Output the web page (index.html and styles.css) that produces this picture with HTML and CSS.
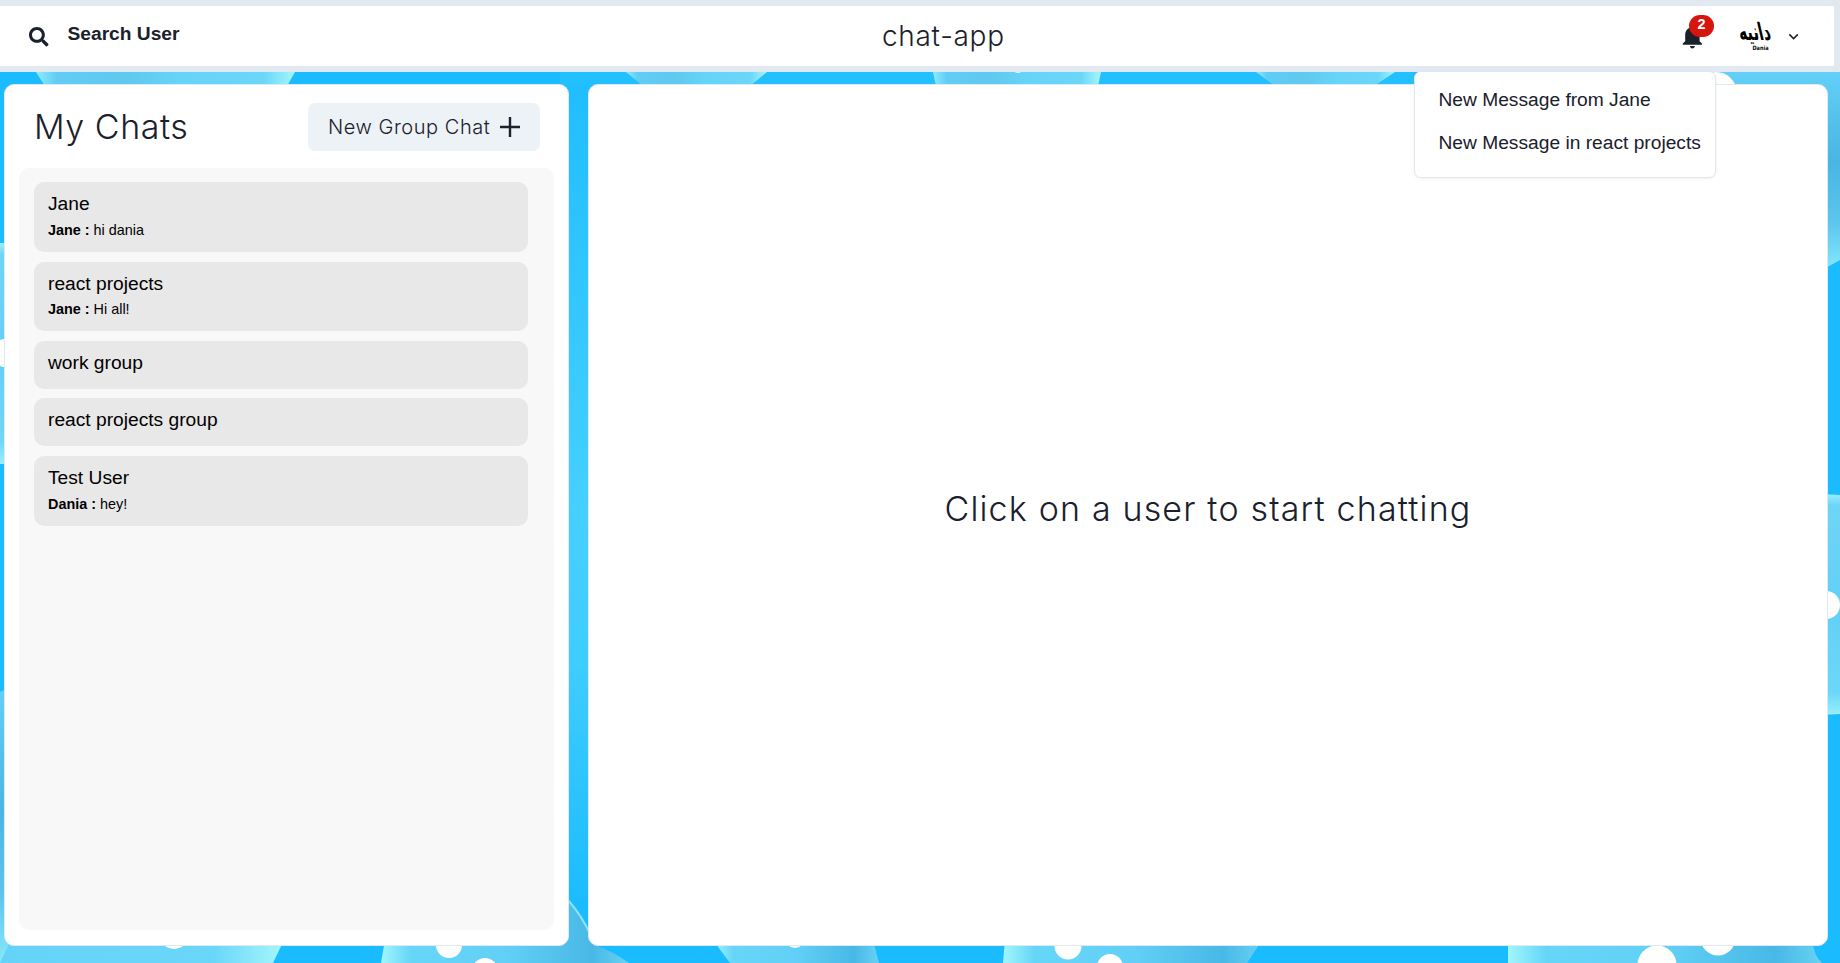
FILE: index.html
```html
<!DOCTYPE html>
<html lang="en">
<head>
<meta charset="utf-8">
<title>chat-app</title>
<link rel="stylesheet" href="styles.css">
</head>
<body>
<svg class="backdrop" viewBox="0 0 1840 963" aria-hidden="true">
  <defs>
    <linearGradient id="gap" x1="0" y1="0" x2="0" y2="1"><stop offset="0" stop-color="#1fbdff"/><stop offset=".5" stop-color="#45d0ff"/><stop offset=".68" stop-color="#3fccff"/><stop offset=".95" stop-color="#1bbcff"/></linearGradient>
    <linearGradient id="b" x1="0" x2="1"><stop offset="0" stop-color="#8eebfb"/><stop offset=".08" stop-color="#61cdf5"/><stop offset=".35" stop-color="#5fc9f0"/><stop offset=".55" stop-color="#66d3f8"/><stop offset=".88" stop-color="#6ad7f9"/><stop offset="1" stop-color="#a6f6fc"/></linearGradient>
    <linearGradient id="d" x1="0" x2="1"><stop offset="0" stop-color="#a2f6fc"/><stop offset=".12" stop-color="#66d6f8"/><stop offset=".5" stop-color="#62d0f6"/><stop offset=".85" stop-color="#48b8e6"/><stop offset="1" stop-color="#69d2f3"/></linearGradient>
    <linearGradient id="v" x1="0" y1="0" x2="0" y2="1"><stop offset="0" stop-color="#62d0f7"/><stop offset=".45" stop-color="#48b5e4"/><stop offset=".75" stop-color="#5cc5ed"/><stop offset="1" stop-color="#86e8f9"/></linearGradient>
    <linearGradient id="s" x1="0" y1="0" x2="0" y2="1"><stop offset="0" stop-color="#98f0fc"/><stop offset=".05" stop-color="#6fd5f7"/><stop offset=".5" stop-color="#63cff7"/><stop offset=".9" stop-color="#6bd8f9"/><stop offset="1" stop-color="#98f0fc"/></linearGradient>
  </defs>
  <rect width="1840" height="963" fill="#1bbcff"/>
  <rect x="560" y="72" width="40" height="875" fill="url(#gap)"/>
  <rect x="560" y="72" width="860" height="13" fill="#23c0ff"/>
  <g fill="url(#b)">
    <path d="M36 72 45 86H287L295 72Z"/>
    <path d="M626 72 643 86H750L767 72Z"/>
    <path d="M933 72 936 86H1098L1101 72Z"/>
    <path d="M1256 72 1275 86H1374L1395 72Z"/>
    <path d="M-300 940H284L273 963H-300Z"/>
  </g>
  <path d="M0 243H10V464H0Z" fill="url(#s)"/>
  <path d="M0 692 10 687V942L0 963Z" fill="url(#v)"/>
  <path d="M1690 72H1840V260L1820 271Z" fill="url(#v)"/>
  <path d="M1820 494 1840 495V714L1820 715Z" fill="url(#s)"/>
  <g fill="url(#d)">
    <path d="M385 940 381 963H629Q612 951 597 946L590 934Q580 912 565 897V940Z"/>
    <path d="M713 940 730 963H879L873 940Z"/>
    <path d="M1005 940 1003 963H1247L1262 940Z"/>
    <path d="M1508 940V963H1822Q1814 956 1812 940Z"/>
  </g>
  <path d="M568 900Q582 916 590 934" fill="none" stroke="#8ae3f8" stroke-width="2"/>
  <g fill="#fefffc">
    <circle cx="174" cy="934" r="15"/><circle cx="449" cy="945" r="13"/><circle cx="485" cy="971" r="13"/>
    <circle cx="795" cy="938" r="10"/><circle cx="1068" cy="946" r="13.5"/><circle cx="1110" cy="967" r="13"/>
    <circle cx="1657" cy="965" r="19.5"/><circle cx="1718" cy="938" r="17.5"/><circle cx="1716" cy="93" r="21"/>
    <ellipse cx="1826" cy="605" rx="14" ry="14"/><circle cx="5" cy="353" r="14"/>
    <circle cx="1018" cy="67" r="6"/>
  </g>
</svg>

<header class="topbar">
  <div class="search">
    <svg class="search-icon" viewBox="0 0 512 512"><path d="M505 442.700 405.300 343c-4.500-4.500-10.600-7-17-7H372c27.600-35.300 44-79.700 44-128C416 93.100 322.900 0 208 0S0 93.100 0 208s93.100 208 208 208c48.300 0 92.700-16.400 128-44v16.300c0 6.400 2.500 12.500 7 17l99.700 99.700c9.400 9.400 24.600 9.400 33.900 0l28.300-28.300c9.400-9.400 9.400-24.600.1-34zM208 336c-70.700 0-128-57.200-128-128 0-70.700 57.200-128 128-128 70.700 0 128 57.200 128 128 0 70.700-57.200 128-128 128z"/></svg>
    <span class="search-label">Search User</span>
  </div>
  <h1 class="brand">chat-app</h1>
  <div class="actions">
    <div class="bell">
      <svg class="bell-icon" viewBox="0 0 24 24"><path d="M12 22c1.100 0 2-.9 2-2h-4c0 1.100.89 2 2 2zm6-6v-5c0-3.070-1.640-5.640-4.500-6.320V4c0-.83-.67-1.500-1.500-1.500s-1.500.67-1.500 1.500v.68C7.630 5.360 6 7.920 6 11v5l-2 2v1h16v-1l-2-2z"/></svg>
      <span class="badge">2</span>
    </div>
    <svg class="avatar" viewBox="0 0 38 38">
      <text class="avatar-script" transform="matrix(1 0 .28 1.200 -3 0)" x="19" y="18.500" text-anchor="middle" textLength="32" lengthAdjust="spacingAndGlyphs">دانيه</text>
      <text class="avatar-name" x="17.500" y="31.500" textLength="16" lengthAdjust="spacingAndGlyphs">Dania</text>
    </svg>
    <svg class="chevron" viewBox="0 0 24 24"><path d="M16.590 8.590 12 13.170 7.410 8.590 6 10l6 6 6-6z"/></svg>
  </div>
  <div class="menu">
    <div class="menu-item">New Message from Jane</div>
    <div class="menu-item">New Message in react projects</div>
  </div>
</header>

<main class="panels">
  <section class="chats">
    <div class="chats-head">
      <h2 class="title">My Chats</h2>
      <button class="new-group"><span>New Group Chat</span><svg class="plus" viewBox="0 0 20 20"><path d="M10 0V20M0 10H20"/></svg></button>
    </div>
    <div class="list">
      <div class="chat"><div class="name">Jane</div><div class="last"><b>Jane : </b>hi dania</div></div>
      <div class="chat second"><div class="name">react projects</div><div class="last"><b>Jane : </b>Hi all!</div></div>
      <div class="chat short"><div class="name">work group</div></div>
      <div class="chat short"><div class="name">react projects group</div></div>
      <div class="chat"><div class="name">Test User</div><div class="last"><b>Dania : </b>hey!</div></div>
    </div>
  </section>
  <section class="conversation"><p class="hint">Click on a user to start chatting</p></section>
</main>
</body>
</html>
```
FILE: styles.css
```css
* { box-sizing: border-box; }
body {
  margin: 0;
  height: 963px;
  overflow: hidden;
  position: relative;
  color: #1a202c;
  font: 19.2px/29px "Liberation Sans", Arial, sans-serif;
}
h1, h2, p { margin: 0; font-weight: 300; font-family: Inter, "Open Sans", sans-serif; }
svg { display: block; fill: #1a202c; }
.backdrop { position: absolute; inset: 0; width: 1840px; height: 963px; z-index: -1; }

.topbar {
  position: relative;
  display: grid;
  grid-template-columns: 1fr auto 1fr;
  height: 72px;
  background: #fff;
  border: solid #e2e8f0;
  border-width: 6px 6px 6px 0;
}
.search { display: flex; padding: 13px 0 0 29px; }
.search-icon { width: 19.500px; height: 19.500px; margin-top: 8px; }
.search-label { margin-left: 19px; font-weight: 700; }
.brand { font-size: 28px; line-height: 36px; padding-top: 12px; width: 123px; margin-left: 53px; white-space: nowrap; letter-spacing: .700px; }
.actions { display: flex; padding-right: 31px; justify-content: flex-end; }
.bell { position: relative; margin-right: 28px; padding-top: 16px; }
.bell-icon { width: 28.800px; height: 28.800px; }
.badge {
  position: absolute;
  left: 11px;
  top: 9px;
  width: 25px;
  height: 22px;
  border-radius: 11px;
  background: #d6150d;
  color: #fff;
  font-size: 14.400px;
  line-height: 18px;
  font-weight: 700;
  text-align: center;
}
.avatar { width: 38px; height: 38px; margin: 12px 11px 0 0; fill: #000; overflow: visible; }
.avatar-script { font: 700 20px "DejaVu Sans", sans-serif; }
.avatar-name { font: 700 6px "DejaVu Sans", sans-serif; }
.chevron { width: 19.200px; height: 19.200px; margin-top: 21px; }

.menu {
  position: absolute;
  z-index: 2;
  left: 1414px;
  top: 65px;
  width: 302px;
  height: 107px;
  padding: 6px 0 0 23.500px;
  background: #fff;
  border: 1px solid #e2e8f0;
  border-radius: 7px;
  box-shadow: 0 1px 3px rgba(0, 0, 0, .06);
}
.menu-item { height: 43px; line-height: 43px; white-space: nowrap; }

.panels { display: flex; gap: 19px; padding: 12px 12px 17px 4px; height: 891px; }
.chats, .conversation { background: #fff; border: 1px solid #e2e8f0; border-radius: 10px; }
.chats { width: 565px; padding: 18px 14px 15px; display: flex; flex-direction: column; }
.chats-head { display: flex; justify-content: space-between; padding: 0 14px 0 15px; height: 65px; }
.title { font-size: 34px; line-height: 48px; white-space: nowrap; letter-spacing: .550px; }
.new-group {
  display: flex;
  align-items: center;
  justify-content: space-between;
  width: 232px;
  height: 48px;
  padding: 0 20px;
  border: 0;
  border-radius: 7px;
  background: #edf2f7;
  color: #1a202c;
  font: 300 20px Inter, "Open Sans", sans-serif;
  letter-spacing: .550px;
}
.plus { width: 20px; height: 20px; fill: none; stroke: #1a202c; stroke-width: 2.400; }
.list { flex: 1; border-radius: 10px; background: #f8f8f8; padding: 14px 26px 0 15px; display: flex; flex-direction: column; gap: 10px; }
.chat { height: 70px; border-radius: 10px; background: #e8e8e8; color: #000; padding: 7px 14px; }
.second { height: 69px; }
.short { height: 48px; }
.short + .short { margin-top: -1px; }
.name { line-height: 29px; }
.last { font-size: 14.400px; line-height: 24px; }
.second .last { line-height: 23px; }
.conversation { flex: 1; display: flex; align-items: center; justify-content: center; }
.hint { font-size: 34px; line-height: 48px; padding-bottom: 13px; white-space: nowrap; letter-spacing: 1.170px; }
```
